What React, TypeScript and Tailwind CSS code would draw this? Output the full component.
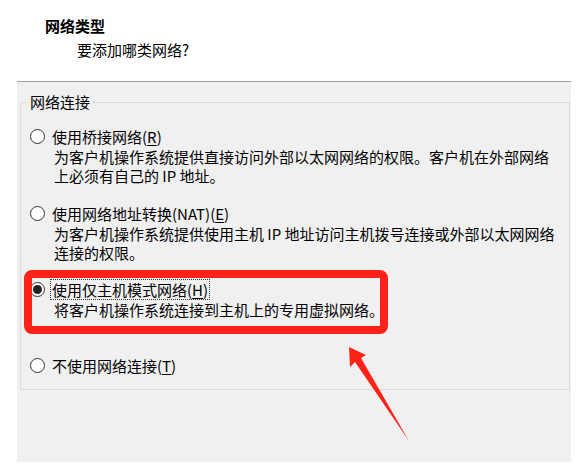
import React from 'react';

type Option = {
    label: React.ReactNode;
    lines: string[];
    checked?: boolean;
    focused?: boolean;
    mt: string;
};

const Key: React.FC<{ k: string }> = ({ k }) => (
    <>
        (<span className="underline underline-offset-[2px]">{k}</span>)
    </>
);

const Radio: React.FC<{ checked?: boolean }> = ({ checked }) => (
    <span className="w-[15px] h-[15px] shrink-0 rounded-full border border-[#333333] bg-white flex items-center justify-center">
        {checked && <span className="w-[9px] h-[9px] rounded-full bg-[#222222]" />}
    </span>
);

const options: Option[] = [
    {
        label: <>使用桥接网络<Key k="R" /></>,
        lines: [
            '为客户机操作系统提供直接访问外部以太网网络的权限。客户机在外部网络',
            '上必须有自己的 IP 地址。',
        ],
        mt: 'mt-[14px]',
    },
    {
        label: <>使用网络地址转换(NAT)<Key k="E" /></>,
        lines: [
            '为客户机操作系统提供使用主机 IP 地址访问主机拨号连接或外部以太网网络',
            '连接的权限。',
        ],
        mt: 'mt-[18px]',
    },
    {
        label: <>使用仅主机模式网络<Key k="H" /></>,
        lines: ['将客户机操作系统连接到主机上的专用虚拟网络。'],
        checked: true,
        focused: true,
        mt: 'mt-[17px]',
    },
    {
        label: <>不使用网络连接<Key k="T" /></>,
        lines: [],
        mt: 'mt-[36px]',
    },
];

export default function App() {
    return (
        <div className="relative w-[577px] h-[473px] bg-white text-black text-[15px] font-['Noto_Sans_CJK_SC','Microsoft_YaHei',sans-serif] overflow-hidden">
            {/* Header */}
            <div className="h-[81px] pt-[16px]">
                <div className="pl-[45px] leading-[20px] font-bold">网络类型</div>
                <div className="pl-[77px] mt-[4px] leading-[20px]">要添加哪类网络?</div>
            </div>

            {/* Body */}
            <div className="ml-[17px] w-[554px] h-[381px] bg-[#f0f0f0] border-t border-[#a0a0a0] pt-[10px] pl-[3px]">
                <fieldset className="w-[550px] border border-[#dcdcdc] pb-[14px]">
                    <legend className="ml-[7px] px-[2px] leading-[20px]">网络连接</legend>

                    {options.map((opt, i) => (
                        <div key={i} className={opt.mt}>
                            <div className="flex items-center h-[20px] pl-[9px]">
                                <Radio checked={opt.checked} />
                                <span
                                    className={
                                        opt.focused
                                            ? 'ml-[5px] px-[1px] h-[21px] leading-[19px] border border-dotted border-[#333333] whitespace-nowrap'
                                            : 'ml-[5px] px-[1px] h-[21px] leading-[19px] border border-transparent whitespace-nowrap'
                                    }
                                >
                                    {opt.label}
                                </span>
                            </div>
                            {opt.lines.length > 0 && (
                                <div className="mt-[1px] pl-[33px] leading-[19px]">
                                    {opt.lines.map((l, j) => (
                                        <div key={j} className="whitespace-nowrap">{l}</div>
                                    ))}
                                </div>
                            )}
                        </div>
                    ))}
                </fieldset>
            </div>

            {/* Annotation: red highlight box */}
            <div className="absolute left-[24px] top-[270px] w-[364px] h-[64px] border-[8px] border-[#ff2218] rounded-[8px]" />

            {/* Annotation: arrow */}
            <svg className="absolute left-0 top-0" width="577" height="473" viewBox="0 0 577 473">
                <polygon
                    points="349,347 366,355 361,358 409,441 355,362 350,367"
                    fill="#ff2218"
                />
            </svg>
        </div>
    );
}
